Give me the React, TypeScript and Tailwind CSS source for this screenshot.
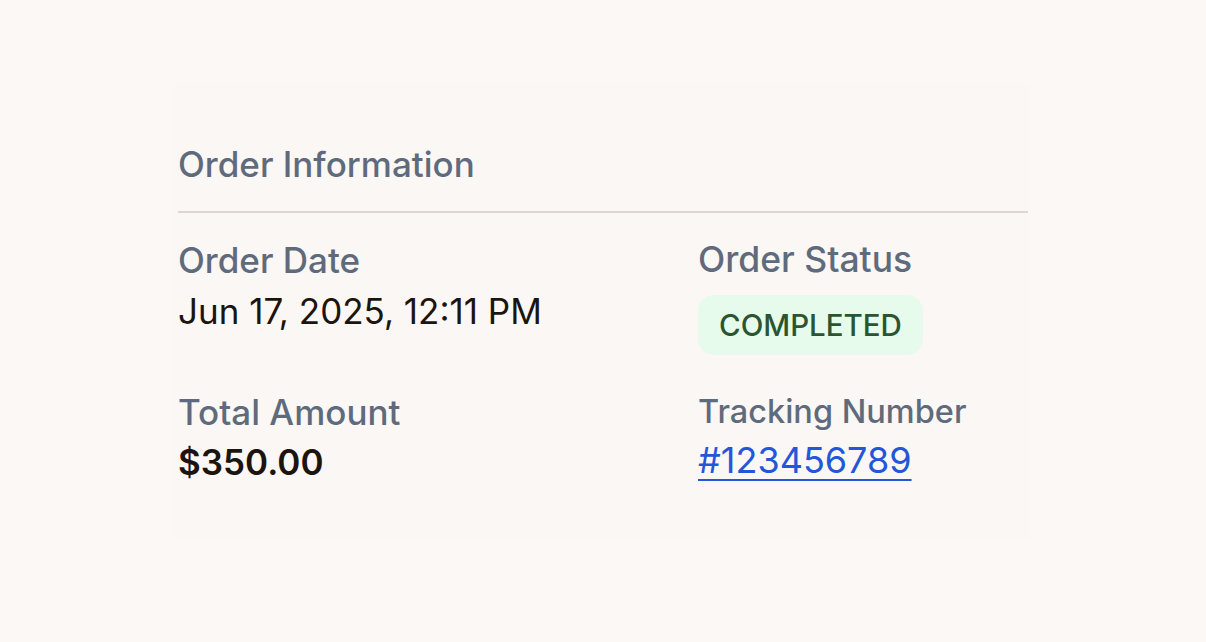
export default function App() {
  return (
    <div className="min-h-screen w-full bg-[#fcf8f5] pt-[82px] font-['Inter',sans-serif]">
      <div className="ml-[175px] w-[856px] h-[458px] bg-[#fbf7f4] px-[3px] pt-[60px]">
        <h2 className="text-[35px] leading-[44px] font-medium text-[#5f6b7c] pb-[25px] border-b-2 border-[#dcd7d2]">
          Order Information
        </h2>
        <div className="grid grid-cols-[520px_1fr] gap-y-[33px] pt-[23px]">
          <div>
            <div className="text-[35px] leading-[48px] font-medium text-[#5f6b7c]">Order Date</div>
            <div className="mt-[3px] text-[35px] leading-[48px] text-[#1c140e]">Jun 17, 2025, 12:11 PM</div>
          </div>
          <div>
            <div className="text-[35.5px] leading-[48px] font-medium text-[#5f6b7c]">Order Status</div>
            <span className="mt-[11px] inline-flex h-[60px] items-center rounded-[16px] bg-[#e6fbec] px-[21px] text-[29.5px] font-medium text-[#2b5430]">
              COMPLETED
            </span>
          </div>
          <div>
            <div className="text-[35px] leading-[48px] font-medium text-[#5f6b7c]">Total Amount</div>
            <div className="mt-[2px] text-[35px] leading-[48px] font-semibold text-[#1c140e]">$350.00</div>
          </div>
          <div>
            <div className="text-[32.5px] leading-[48px] font-medium text-[#5f6b7c]">Tracking Number</div>
            <a href="#" className="inline-block text-[36px] leading-[48px] text-[#2456d9] underline underline-offset-[6px] decoration-2">
              #123456789
            </a>
          </div>
        </div>
      </div>
    </div>
  )
}
